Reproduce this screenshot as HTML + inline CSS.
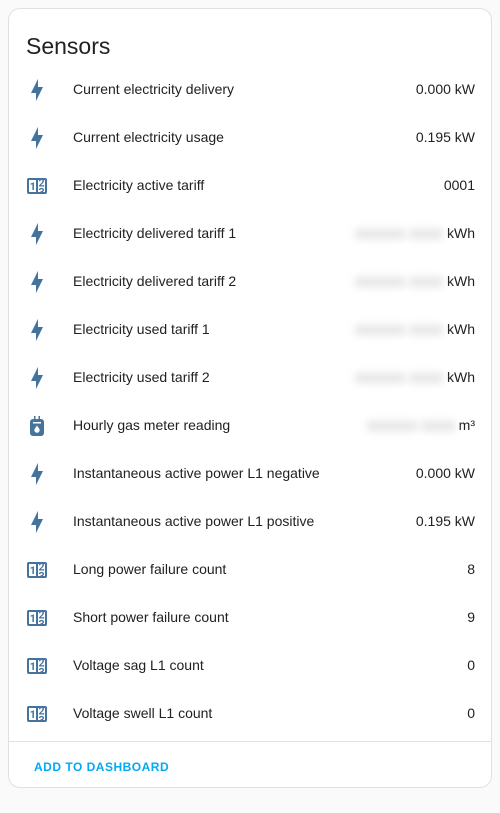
<!DOCTYPE html>
<html><head><style>
body{margin:0;background:#fafafa;font-family:"Liberation Sans",Roboto,sans-serif;width:500px;height:813px;overflow:hidden}
.card{position:absolute;left:8px;top:8px;width:482px;height:778px;background:#fff;border:1px solid #e0e0e0;border-radius:12px}
h1{position:absolute;left:17px;top:24px;margin:0;font-size:23px;font-weight:400;color:#212121}
.row{position:absolute;left:0;width:482px;height:48px}
.row svg{position:absolute;left:16px;top:12px;width:24px;height:24px;fill:#44739e}
.n{position:absolute;left:64px;top:15px;font-size:14px;color:#212121}
.v{position:absolute;right:16px;top:15px;font-size:14px;color:#212121}
.b{display:inline-block;width:50px;height:10px;background:#e6e6e6;filter:blur(4px);vertical-align:middle;margin-right:4px}
.div{position:absolute;left:0;right:0;top:732px;border-top:1px solid #e0e0e0}
.btn{position:absolute;left:25px;top:751px;font-size:12px;font-weight:700;color:#03a9f4;letter-spacing:0.5px}
</style></head><body>
<div class="card">
<h1>Sensors</h1>
<div id="rows"></div>
<div class="div"></div>
<div class="btn">ADD TO DASHBOARD</div>
</div>
<script>
var F='<svg viewBox="0 0 24 24"><path d="M11 15H6L13 1V9H18L11 23V15Z"/></svg>';
var C='<svg viewBox="0 0 24 24"><path d="M4,4H20A2,2 0 0,1 22,6V18A2,2 0 0,1 20,20H4A2,2 0 0,1 2,18V6A2,2 0 0,1 4,4M4,6V18H11V6H4M20,18V6H18.76C19,6.54 18.95,7.07 18.95,7.13C18.88,7.8 18.41,8.5 18.24,8.75L15.91,11.3L19.23,11.28L19.24,12.5L14.04,12.47L14,11.47C14,11.47 17.05,8.24 17.2,7.950C17.34,7.67 17.91,6 16.5,6C15.27,6.05 15.410,7.3 15.41,7.3L13.87,7.31C13.87,7.31 13.88,6.65 14.25,6H13V18H15.58L15.57,17.14L16.54,17.13C16.54,17.13 17.45,16.97 17.46,16.08C17.5,15.08 16.65,15.08 16.5,15.08C16.37,15.08 15.43,15.13 15.43,15.95H13.91C13.91,15.95 13.95,13.89 16.5,13.89C19.1,13.89 18.96,15.91 18.96,15.91C18.96,15.91 19,17.16 17.85,17.63L18.37,18H20M8.92,16H7.42V10.2L5.62,10.76V9.53L8.76,8.41H8.92V16Z"/></svg>';
var G='<svg viewBox="0 0 24 24"><path d="M9,2H10.5V5H9ZM13.5,2H15V5H13.5Z"/><rect x="5" y="5" width="14" height="17" rx="3"/><path d="M12,11.5 L14.2,14.8 A2.6,2.6 0 1 1 9.8,14.8 Z" fill="#fff"/><rect x="8" y="8" width="8" height="1.5" fill="#fff"/></svg>';
var b='<span class="b"></span><span class="b" style="width:34px"></span>';
var d=[[F,'Current electricity delivery','0.000 kW'],[F,'Current electricity usage','0.195 kW'],[C,'Electricity active tariff','0001'],[F,'Electricity delivered tariff 1',b+'kWh'],[F,'Electricity delivered tariff 2',b+'kWh'],[F,'Electricity used tariff 1',b+'kWh'],[F,'Electricity used tariff 2',b+'kWh'],[G,'Hourly gas meter reading',b+'m³'],[F,'Instantaneous active power L1 negative','0.000 kW'],[F,'Instantaneous active power L1 positive','0.195 kW'],[C,'Long power failure count','8'],[C,'Short power failure count','9'],[C,'Voltage sag L1 count','0'],[C,'Voltage swell L1 count','0']];
var h='';d.forEach(function(r,i){h+='<div class="row" style="top:'+(57+48*i)+'px">'+r[0]+'<div class="n">'+r[1]+'</div><div class="v">'+r[2]+'</div></div>'});
document.getElementById('rows').innerHTML=h;
</script>
</body></html>
